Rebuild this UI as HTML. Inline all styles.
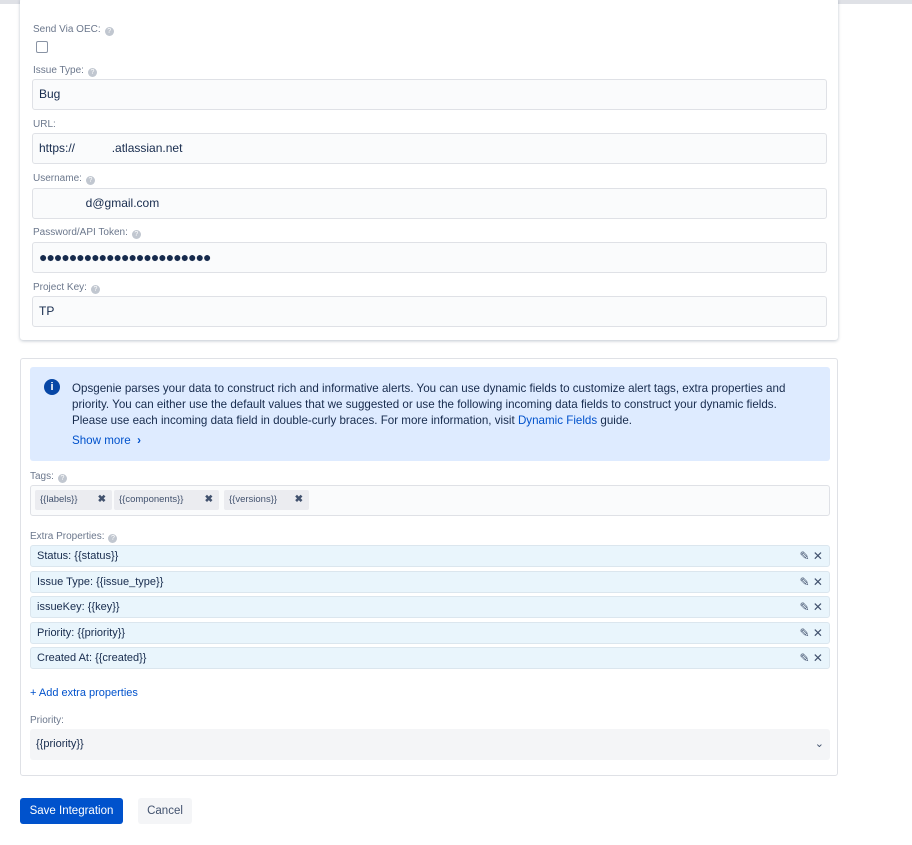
<!DOCTYPE html>
<html><head><style>
body{margin:0;width:912px;height:845px;background:#fff;font-family:"Liberation Sans",sans-serif;position:relative;overflow:hidden;color:#172b4d}
.top{position:absolute;left:0;top:0;width:912px;height:4px;background:#dfe1e6}
.card1{position:absolute;left:20px;top:-2px;width:818px;height:342px;background:#fff;box-shadow:0 1px 3px rgba(9,30,66,.25);border-radius:3px}
.card2{position:absolute;left:20px;top:358px;width:816px;height:416px;border:1px solid #dfe1e6;border-radius:3px}
.lbl{position:absolute;font-size:10px;color:#6b778c}
.q{display:inline-block;width:9px;height:9px;border-radius:50%;background:#c1c7d0;vertical-align:-1px;margin-left:4px;color:#fff;font-size:7px;text-align:center;line-height:9px}
.inp{position:absolute;left:32px;width:795px;height:31px;border:1px solid #dfe1e6;background:#fafbfc;border-radius:3px;font-size:12px;line-height:29px;padding-left:6px;box-sizing:border-box}
.info{position:absolute;left:30px;top:367px;width:800px;height:94px;background:#deebff;border-radius:3px;font-size:11.6px;line-height:16px;color:#172b4d}
.tags{position:absolute;left:30px;top:485px;width:798px;height:29px;border:1px solid #dfe1e6;border-radius:3px;background:#fafbfc}
.tag{position:absolute;top:4px;height:20px;background:#ebecf0;font-size:9.5px;line-height:20px;color:#42526e;padding-left:5px;border-radius:2px}
.tag b{position:absolute;right:6px;font-size:10px}
.row{position:absolute;left:30px;height:20px;background:#e9f5fc;border:1px solid #dbe6ee;border-radius:3px;font-size:11px;line-height:20px;padding-left:6px;box-sizing:content-box;width:792px}
.ic{position:absolute;right:6px;top:0;font-size:12px;color:#42526e}
</style></head><body>
<div class="top"></div>
<div class="card1"></div>
<div class="lbl" style="left:33px;top:24px">Send Via OEC:<span class="q">?</span></div>
<div style="position:absolute;left:36px;top:41px;width:10px;height:10px;border:1px solid #8993a4;border-radius:2px"></div>
<div class="lbl" style="left:33px;top:65px">Issue Type:<span class="q">?</span></div>
<div class="inp" style="top:79px">Bug</div>
<div class="lbl" style="left:33px;top:119px">URL:</div>
<div class="inp" style="top:133px">https://&nbsp;&nbsp;&nbsp;&nbsp;&nbsp;&nbsp;&nbsp;&nbsp;&nbsp;&nbsp;&nbsp;.atlassian.net</div>
<div class="lbl" style="left:33px;top:173px">Username:<span class="q">?</span></div>
<div class="inp" style="top:188px">&nbsp;&nbsp;&nbsp;&nbsp;&nbsp;&nbsp;&nbsp;&nbsp;&nbsp;&nbsp;&nbsp;&nbsp;&nbsp;&nbsp;d@gmail.com</div>
<div class="lbl" style="left:33px;top:227px">Password/API Token:<span class="q">?</span></div>
<div class="inp" style="top:242px;font-size:14px;letter-spacing:-1px">●●●●●●●●●●●●●●●●●●●●●●●</div>
<div class="lbl" style="left:33px;top:282px">Project Key:<span class="q">?</span></div>
<div class="inp" style="top:296px">TP</div>

<div class="card2"></div>
<div class="info">
<div style="position:absolute;left:14px;top:12px;width:16px;height:16px;border-radius:50%;background:#0747a6;color:#fff;font-size:11px;font-weight:bold;text-align:center;line-height:16px">i</div>
<div style="position:absolute;left:42px;top:14px;width:718px">Opsgenie parses your data to construct rich and informative alerts. You can use dynamic fields to customize alert tags, extra properties and priority. You can either use the default values that we suggested or use the following incoming data fields to construct your dynamic fields. Please use each incoming data field in double-curly braces. For more information, visit <span style="color:#0052cc">Dynamic Fields</span> guide.</div>
<div style="position:absolute;left:42px;top:66px;color:#0052cc">Show more&nbsp; <b>›</b></div>
</div>
<div class="lbl" style="left:30px;top:471px">Tags:<span class="q">?</span></div>
<div class="tags">
<div class="tag" style="left:4px;width:72px">{{labels}}<b>✖</b></div>
<div class="tag" style="left:83px;width:100px">{{components}}<b>✖</b></div>
<div class="tag" style="left:193px;width:80px">{{versions}}<b>✖</b></div>
</div>
<div class="lbl" style="left:30px;top:531px">Extra Properties:<span class="q">?</span></div>
<div class="row" style="top:545px">Status: {{status}}<span class="ic">✎ ✕</span></div>
<div class="row" style="top:571px">Issue Type: {{issue_type}}<span class="ic">✎ ✕</span></div>
<div class="row" style="top:596px">issueKey: {{key}}<span class="ic">✎ ✕</span></div>
<div class="row" style="top:622px">Priority: {{priority}}<span class="ic">✎ ✕</span></div>
<div class="row" style="top:647px">Created At: {{created}}<span class="ic">✎ ✕</span></div>
<div style="position:absolute;left:30px;top:687px;font-size:11px;color:#0052cc">+ Add extra properties</div>
<div class="lbl" style="left:30px;top:715px">Priority:</div>
<div style="position:absolute;left:30px;top:729px;width:794px;height:31px;background:#f4f5f7;border-radius:3px;font-size:11px;line-height:31px;padding-left:6px">{{priority}}<span style="position:absolute;right:6px;font-size:11px;color:#42526e">⌄</span></div>
<div style="position:absolute;left:20px;top:798px;width:103px;height:26px;background:#0052cc;border-radius:3px;color:#fff;font-size:11.5px;line-height:26px;text-align:center">Save Integration</div>
<div style="position:absolute;left:138px;top:798px;width:54px;height:26px;background:#f4f5f7;border-radius:3px;color:#42526e;font-size:11.5px;line-height:26px;text-align:center">Cancel</div>
</body></html>
